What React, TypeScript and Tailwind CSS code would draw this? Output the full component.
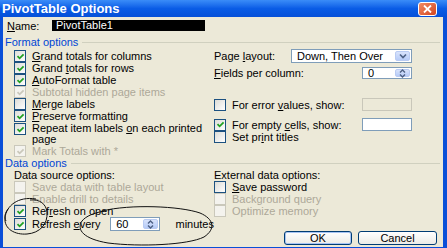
import type { ReactNode } from 'react';

const font = { fontFamily: '"Liberation Sans", Arial, sans-serif' };

const Check = ({ color }: { color: string }) => (
  <svg width="9" height="9" viewBox="0 0 9 9" className="block">
    <path d="M1.5 4.2 L3.6 6.3 L7.6 2.3" fill="none" stroke={color} strokeWidth="1.8" />
  </svg>
);

const Box = ({ checked = false, disabled = false }: { checked?: boolean; disabled?: boolean }) => (
  <div
    className={`w-[12px] h-[12px] shrink-0 border flex items-center justify-center ${
      disabled ? 'border-[#cac8bb] bg-[#f4f3ee]' : 'border-[#1c5180] bg-gradient-to-br from-[#dcdcd7] to-white'
    }`}
  >
    {checked && <Check color={disabled ? '#cac8bb' : '#21a121'} />}
  </div>
);

const Row = ({
  children,
  checked,
  disabled,
  className = '',
}: {
  children: ReactNode;
  checked?: boolean;
  disabled?: boolean;
  className?: string;
}) => (
  <div className={`flex items-center h-[12px] ${className}`}>
    <Box checked={checked} disabled={disabled} />
    <span className={`ml-[6px] whitespace-nowrap ${disabled ? 'text-[#aca899]' : 'text-black'}`}>{children}</span>
  </div>
);

const Header = ({ children }: { children: ReactNode }) => (
  <div className="flex items-center h-[12px] pl-[2px] pr-[3px]">
    <span className="text-[#0046d5] whitespace-nowrap">{children}</span>
    <div className="flex-1 h-px bg-[#d0d0bf] ml-[4px]" />
  </div>
);

const SpinArrows = () => (
  <div className="w-[15px] h-full bg-gradient-to-b from-[#d8e3fc] to-[#b6cbf7] rounded-[2px] border border-[#b9cbf3] flex items-center justify-center">
    <svg width="7" height="9" viewBox="0 0 7 9">
      <path d="M1 3.5 L3.5 1 L6 3.5 M1 5.5 L3.5 8 L6 5.5" fill="none" stroke="#4d6185" strokeWidth="1.4" />
    </svg>
  </div>
);

const Spinner = ({ value, className = '' }: { value: string; className?: string }) => (
  <div className={`flex items-stretch border border-[#7f9db9] bg-white p-px ${className}`}>
    <span className="flex-1 pl-[4px] leading-[10px] flex items-center">{value}</span>
    <SpinArrows />
  </div>
);

const Btn = ({ children, def = false, className = '' }: { children: ReactNode; def?: boolean; className?: string }) => (
  <div
    className={`h-[14px] rounded-[3px] border border-[#003c74] flex items-center justify-center bg-gradient-to-b from-white to-[#ecebe6] ${
      def ? 'shadow-[inset_0_0_0_1px_#a7c4f3]' : ''
    } ${className}`}
  >
    {children}
  </div>
);

export default function App() {
  return (
    <div className="relative w-[447px] h-[248px] overflow-hidden bg-[#0a4fd8] flex flex-col text-[11px] leading-[12px]" style={font}>
      {/* title bar */}
      <div className="h-[17px] shrink-0 flex items-center pl-[2px] pr-[10px] bg-gradient-to-b from-[#3a8cf8] via-[#0a5ce6] to-[#0650d8]">
        <span className="text-white font-bold text-[13px]">PivotTable Options</span>
        <div className="ml-auto w-[19px] h-[14px] rounded-[3px] border border-white bg-gradient-to-br from-[#f08a64] to-[#d2441c] flex items-center justify-center">
          <svg width="9" height="8" viewBox="0 0 9 8">
            <path d="M1 0.5 L8 7.5 M8 0.5 L1 7.5" stroke="white" strokeWidth="1.8" />
          </svg>
        </div>
      </div>

      {/* body */}
      <div className="flex-1 ml-[3px] mr-[4px] mb-[4px] bg-[#ece9d8] flex flex-col">
        <div className="flex items-center mt-[3px] h-[11px]">
          <span className="pl-[4px] w-[49px]"><u>N</u>ame:</span>
          <div className="w-[153px] h-[11px] bg-black text-white leading-[11px] pl-[4px]">PivotTable1</div>
        </div>

        <div className="mt-[5px]">
          <Header>Format options</Header>
        </div>

        <div className="grid grid-cols-[200px_1fr] pl-[11px] mt-[2px]">
          <div className="flex flex-col">
            <Row checked>
              <u>G</u>rand totals for columns
            </Row>
            <Row checked>
              Grand <u>t</u>otals for rows
            </Row>
            <Row checked>
              <u>A</u>utoFormat table
            </Row>
            <Row checked disabled>
              Subtotal hidden page items
            </Row>
            <Row>
              <u>M</u>erge labels
            </Row>
            <Row checked>
              <u>P</u>reserve formatting
            </Row>
            <div className="flex items-start h-[23px] pt-[1px]">
              <Box checked />
              <span className="ml-[6px] leading-[11px]">
                Repeat item labels <u>o</u>n each printed
                <br />
                page
              </span>
            </div>
            <Row checked disabled>
              Mark Totals with *
            </Row>
          </div>

          <div className="flex flex-col pr-[31px]">
            <div className="flex items-center h-[14px] -mt-[1px]">
              <span className="w-[77px]">
                Page <u>l</u>ayout:
              </span>
              <div className="flex-1 h-[14px] flex items-stretch border border-[#7f9db9] bg-white p-px">
                <span className="flex-1 pl-[4px] flex items-center">Down, Then Over</span>
                <div className="w-[15px] bg-gradient-to-b from-[#d8e3fc] to-[#b6cbf7] rounded-[2px] border border-[#b9cbf3] flex items-center justify-center">
                  <svg width="8" height="6" viewBox="0 0 8 6">
                    <path d="M1 1.5 L4 4.5 L7 1.5" fill="none" stroke="#4d6185" strokeWidth="1.6" />
                  </svg>
                </div>
              </div>
            </div>
            <div className="flex items-center h-[12px] mt-[4px]">
              <span className="flex-1">
                <u>F</u>ields per column:
              </span>
              <Spinner value="0" className="w-[50px] h-[12px]" />
            </div>
            <div className="flex items-center h-[13px] mt-[19px]">
              <Box />
              <span className="ml-[6px] flex-1 whitespace-nowrap">
                For error <u>v</u>alues, show:
              </span>
              <div className="w-[50px] h-[13px] border border-[#c9c7ba] bg-[#ece9d8]" />
            </div>
            <div className="flex items-center h-[13px] mt-[7px]">
              <Box checked />
              <span className="ml-[6px] flex-1 whitespace-nowrap">
                For empty <u>c</u>ells, show:
              </span>
              <div className="w-[50px] h-[13px] border border-[#7f9db9] bg-white" />
            </div>
            <Row>
              Set pr<u>i</u>nt titles
            </Row>
          </div>
        </div>

        <Header>Data options</Header>

        <div className="grid grid-cols-[200px_1fr] pl-[11px]">
          <div className="flex flex-col">
            <div className="h-[12px] flex items-center">Data source options:</div>
            <Row disabled>Save data with table layout</Row>
            <Row disabled>Enable drill to details</Row>
            <Row checked className="h-[11px]">
              Ref<u>r</u>esh on open
            </Row>
            <div className="flex items-center h-[14px]">
              <Box checked />
              <span className="ml-[6px] w-[81px]">
                Refresh <u>e</u>very
              </span>
              <Spinner value="60" className="w-[52px] h-[14px]" />
              <span className="ml-[15px]">minutes</span>
            </div>
          </div>
          <div className="flex flex-col">
            <div className="h-[12px] flex items-center">External data options:</div>
            <Row>
              <u>S</u>ave password
            </Row>
            <Row disabled>Background query</Row>
            <Row disabled className="h-[11px]">
              Optimize memory
            </Row>
          </div>
        </div>

        <div className="flex justify-end gap-[6px] pr-[6px] mt-auto mb-[2px]">
          <Btn def className="w-[68px]">
            OK
          </Btn>
          <Btn className="w-[79px]">Cancel</Btn>
        </div>
      </div>

      {/* hand drawn annotation marks */}
      <svg className="absolute left-0 top-0 pointer-events-none" width="447" height="248" viewBox="0 0 447 248">
        <path
          d="M36 199 C18 196 6 206 5 218 C4 229 15 235 27 234 C40 233 48 224 47 212 C46 204 40 199 30 200 M8 209 C5 213 4 217 6 221"
          fill="none"
          stroke="#111"
          strokeWidth="1"
        />
        <path
          d="M102 211 C130 204 180 206 200 213 C214 219 216 229 204 237 C188 245 140 247 108 243 C84 239 76 230 82 221 C86 216 94 213 104 211"
          fill="none"
          stroke="#111"
          strokeWidth="1"
        />
      </svg>
    </div>
  );
}
